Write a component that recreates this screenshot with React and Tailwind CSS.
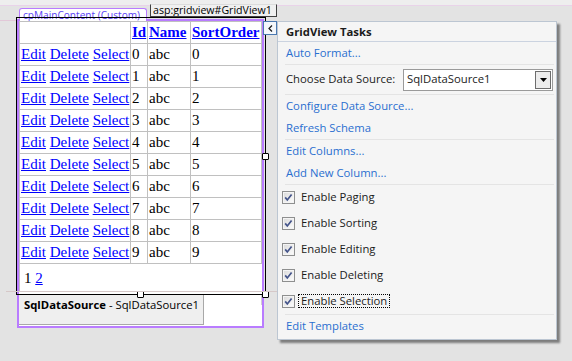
const rows = [0, 1, 2, 3, 4, 5, 6, 7, 8, 9];

const cell = "h-[22px] border-r border-b border-[#c0c0c0] px-px leading-[21px] whitespace-nowrap";
const link = "text-[#0000ff] underline";

const Check = () => (
  <svg width="13" height="13" viewBox="0 0 13 13" className="shrink-0">
    <defs>
      <linearGradient id="cbg" x1="0" y1="0" x2="1" y2="1">
        <stop offset="0" stopColor="#dcdcdc" />
        <stop offset="1" stopColor="#fbfbfb" />
      </linearGradient>
    </defs>
    <rect x="0.5" y="0.5" width="12" height="12" fill="#f4f4f4" stroke="#8e8f8f" />
    <rect x="2" y="2" width="9" height="9" fill="url(#cbg)" />
    <path d="M3.2 6.4 L5.3 9 L9.6 3.4" fill="none" stroke="#44548a" strokeWidth="1.7" />
  </svg>
);

const Sep = () => <div className="h-px ml-[7px] mr-[2px] bg-[#e4e4e4]" />;

const Link = ({ h, children }) => (
  <div className={`pl-[8px] text-[#2a6fd0] ${h}`}>{children}</div>
);

const Option = ({ h, label, focus }) => (
  <div className={`flex items-center pl-[4px] ${h}`}>
    <Check />
    {focus ? (
      <span className="ml-[3px] px-[3px] leading-[14px] outline-1 outline-dotted outline-black -outline-offset-1">
        {label}
      </span>
    ) : (
      <span className="ml-[6px]">{label}</span>
    )}
  </div>
);

const GridView = () => (
  <div className="grid grid-cols-[111px_17px_43px_71px] border-l border-t border-[#c0c0c0] font-['Liberation_Serif',serif] text-[15px] text-black">
    <div className={cell}></div>
    <div className={`${cell} font-bold ${link}`}>Id</div>
    <div className={`${cell} font-bold ${link}`}>Name</div>
    <div className={`${cell} font-bold ${link}`}>SortOrder</div>
    {rows.map((r) => (
      <div key={r} className="contents">
        <div className={cell}>
          <span className={link}>Edit</span> <span className={link}>Delete</span>{" "}
          <span className={link}>Select</span>
        </div>
        <div className={cell}>{r}</div>
        <div className={cell}>abc</div>
        <div className={cell}>{r}</div>
      </div>
    ))}
    <div className="col-span-4 h-[28px] leading-[28px] pl-[5px] -ml-px">
      1 <span className={link}>2</span>
    </div>
  </div>
);

const TasksPanel = () => (
  <div className="absolute left-[277px] top-[21px] w-[280px] h-[319px] border border-[#bcc6d2] bg-[#f5f5f5] shadow-[3px_3px_2px_rgba(0,0,0,0.45)] text-[11.3px] text-[#1b1b1b]">
    <div className="h-[20px] leading-[20px] pl-[8px] font-bold border-b border-[#cbd3e0]">GridView Tasks</div>
    <Link h="h-[22px] leading-[22px]">Auto Format...</Link>
    <Sep />
    <div className="h-[29px] flex items-center pl-[8px]">
      <span>Choose Data Source:</span>
      <div className="ml-auto mr-[3px] w-[150px] h-[22px] border border-[#9a9a9a] bg-white flex items-center">
        <span className="pl-[3px]">SqlDataSource1</span>
        <div className="ml-auto mr-px w-[16px] h-[18px] border border-[#6d6d6d] bg-[#ececec] flex items-center justify-center">
          <svg width="7" height="4" viewBox="0 0 7 4">
            <path d="M0 0 H7 L3.5 4 Z" fill="#000" />
          </svg>
        </div>
      </div>
    </div>
    <Sep />
    <Link h="h-[22px] leading-[22px]">Configure Data Source...</Link>
    <Link h="h-[22px] leading-[22px]">Refresh Schema</Link>
    <Sep />
    <Link h="h-[22px] leading-[22px]">Edit Columns...</Link>
    <Link h="h-[22px] leading-[22px]">Add New Column...</Link>
    <Sep />
    <Option h="h-[25px]" label="Enable Paging" />
    <Option h="h-[26px]" label="Enable Sorting" />
    <Option h="h-[26px]" label="Enable Editing" />
    <Option h="h-[26px]" label="Enable Deleting" />
    <Option h="h-[26px]" label="Enable Selection" focus />
    <Sep />
    <Link h="h-[22px] leading-[22px]">Edit Templates</Link>
  </div>
);

const Handle = ({ className }) => (
  <div className={`absolute w-[7px] h-[7px] border border-black bg-white rounded-[1px] ${className}`} />
);

export default function App() {
  return (
    <div className="relative w-[572px] h-[361px] overflow-hidden bg-[#e3e3e3] font-['Segoe_UI','Open_Sans',sans-serif]">
      {/* design surface guides */}
      <div className="absolute left-0 right-0 top-0 h-[6px] bg-[#eeeeee] border-b border-[#e9d3e9]" />
      <div className="absolute left-0 top-[20px] w-[17px] h-px bg-[#e2c8d8]" />

      <div className="pt-[19px] pl-[17px]">
        {/* content placeholder */}
        <div className="relative w-[247px] h-[309px] border-2 border-[#b97cff] bg-white">
          <div className="absolute left-0 -top-[13px] w-[128px] h-[13px] border border-b-0 border-[#b97cff] rounded-t-[3px] bg-white text-[#5b44f5] text-[10.1px] leading-[12px] pl-[3px] whitespace-nowrap overflow-hidden">
            cpMainContent (Custom)
          </div>

          <GridView />

          <div className="mt-[3px] w-[185px] h-[30px] bg-[#efefef] border-r border-b border-[#a8a8a8] pl-[5px] pt-[1px] leading-[18px] text-[11.3px] text-black">
            <span className="font-bold">SqlDataSource</span> - SqlDataSource1
          </div>
          <div className="absolute left-[242px] top-[274px] w-px h-[10px] bg-[#d0d0d0]" />

          {/* selection frame */}
          <div className="absolute -left-[3px] -top-[4px] w-[250px] h-[278px] border border-black pointer-events-none" />
          <Handle className="left-[243px] top-[132px]" />
          <Handle className="left-[118px] top-[270px]" />
          <Handle className="left-[243px] top-[270px]" />

          <div className="absolute left-[131px] -top-[17px] w-[127px] h-[13px] bg-[#f0f0f0] border border-t-[#dcdcdc] border-[#404040] text-[10.6px] leading-[11px] pl-[2px] text-black whitespace-nowrap overflow-hidden">
            asp:gridview#GridView1
          </div>

          <div className="absolute left-[244px] top-0 w-[14px] h-[14px] border border-[#4a78b0] bg-[#f4f7fb] flex items-center justify-center">
            <svg width="5" height="7" viewBox="0 0 5 7">
              <path d="M4 0.5 L1 3.5 L4 6.5" fill="none" stroke="#1a1a1a" strokeWidth="1.2" />
            </svg>
          </div>
        </div>
      </div>

      <div className="absolute left-[6px] top-[291px] w-[272px] h-px bg-[#d6c8c8]" />

      <TasksPanel />
    </div>
  );
}
